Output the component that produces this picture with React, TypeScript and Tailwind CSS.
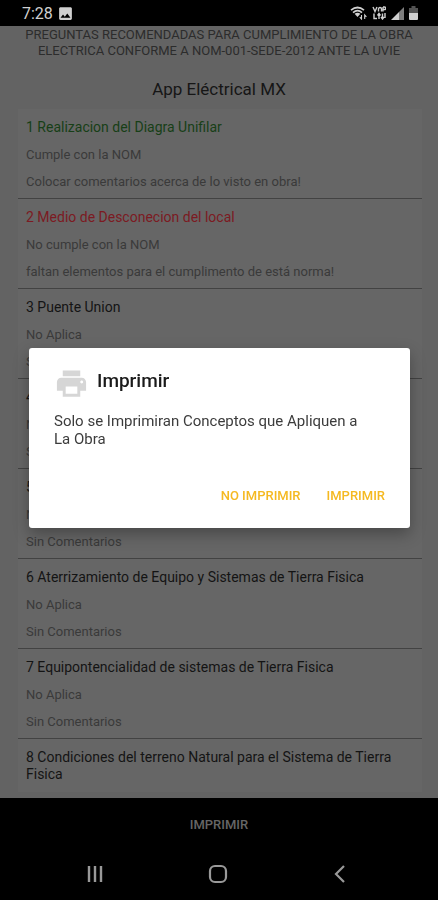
import { MdImage, MdPrint } from "react-icons/md";

type Item = {
  title: string;
  status?: string;
  comment?: string;
  color?: string;
};

const items: Item[] = [
  {
    title: "1 Realizacion del Diagra Unifilar",
    status: "Cumple con la NOM",
    comment: "Colocar comentarios acerca de lo visto en obra!",
    color: "text-[#173f17]",
  },
  {
    title: "2 Medio de Desconecion del local",
    status: "No cumple con la NOM",
    comment: "faltan elementos para el cumplimento de está norma!",
    color: "text-[#7c1a22]",
  },
  { title: "3 Puente Union", status: "No Aplica", comment: "Sin Comentarios" },
  { title: "4", status: "No Aplica", comment: "Sin Comentarios" },
  { title: "5", status: "No Aplica", comment: "Sin Comentarios" },
  {
    title: "6 Aterrizamiento de Equipo y Sistemas de Tierra Fisica",
    status: "No Aplica",
    comment: "Sin Comentarios",
  },
  {
    title: "7 Equipontencialidad de sistemas de Tierra Fisica",
    status: "No Aplica",
    comment: "Sin Comentarios",
  },
  { title: "8 Condiciones del terreno Natural para el Sistema de Tierra Fisica" },
];

function StatusBar() {
  return (
    <header className="flex h-[26px] shrink-0 items-center bg-black pl-[22px] pr-5 text-[#d0d0d0]">
      <span className="pt-0.5 text-base leading-none">7:28</span>
      <MdImage className="ml-1 size-[17px]" />
      <div className="ml-auto flex items-center gap-[5px]">
        <svg width="17" height="14" viewBox="0 0 17 14" fill="none" stroke="currentColor">
          <path d="M1 4.2Q7.5-1.2 14 4.2M3 6.6Q7.5 2.8 12 6.6" strokeWidth="1.7" />
          <path d="M4.6 7.8Q7.5 5.6 10.4 7.8L7.5 11Z" fill="currentColor" stroke="none" />
          <path d="M11.5 9v4l-1.7-1.8M14.7 13V9l1.7 1.8" strokeWidth="1.1" />
        </svg>
        <svg width="14" height="14" viewBox="0 0 14 14" fill="none" stroke="currentColor" strokeWidth="1.4">
          <path d="M1 1l2 4.500L5 1M6.500 5.500V3a1.500 1.500 0 013 0v2.500M11 1v4.500M11 1h1.500a1.200 1.200 0 010 2.500H11M2 7.500v5h3M7 13V8M5.500 9.500L7 7.500l1.500 2M10.500 7.500v5M9 11l1.500 2 1.500-2M13 7v5" />
        </svg>
        <svg width="13" height="13" viewBox="0 0 13 13" fill="currentColor">
          <path d="M0 13L8 5v8z" />
          <path d="M8 5l5-5v13H8z" opacity="0.6" />
        </svg>
        <svg width="9" height="14" viewBox="0 0 9 14" fill="currentColor">
          <path d="M2.500 0h4v2H9v5H0V2h2.500z" opacity="0.4" />
          <path d="M0 7h9v6a1 1 0 01-1 1H1a1 1 0 01-1-1z" />
        </svg>
      </div>
    </header>
  );
}

function Row({ item }: { item: Item }) {
  return (
    <li className="flex flex-col gap-2.5 border-b border-[#424242] bg-[#666666] px-2 pb-2 pt-2.5 last:border-transparent">
      <h2 className={`text-sm/[17px] ${item.color ?? "text-[#141414]"}`}>{item.title}</h2>
      {item.status && <p className="text-[13px]/[17px] text-[#3a3a3a]">{item.status}</p>}
      {item.comment && <p className="text-[13px]/[17px] text-[#3a3a3a]">{item.comment}</p>}
    </li>
  );
}

function PrintDialog() {
  return (
    <div className="fixed inset-x-0 bottom-[51px] top-[26px] flex items-center pl-[29px] pr-7">
      <div
        role="dialog"
        aria-labelledby="print-title"
        className="w-full rounded-[3px] bg-white px-[25px] pb-3.5 pt-[18px] shadow-[0_6px_16px_rgba(0,0,0,0.3)]"
      >
        <div className="flex items-center gap-2">
          <MdPrint className="size-[35px] text-[#d6d6d6]" />
          <h2 id="print-title" className="pb-1 text-[19px] font-medium text-[#1a1a1a]">
            Imprimir
          </h2>
        </div>
        <p className="mt-[11px] pr-4 text-[15px] leading-[18px] text-[#3c3c3c]">
          Solo se Imprimiran Conceptos que Apliquen a La Obra
        </p>
        <div className="mt-[30px] flex justify-end gap-[26px] text-[13px] font-medium text-[#f5b921]">
          <button className="h-9">NO IMPRIMIR</button>
          <button className="h-9">IMPRIMIR</button>
        </div>
      </div>
    </div>
  );
}

function NavBar() {
  return (
    <nav className="flex h-[49px] shrink-0 items-center justify-between bg-black pb-1 pl-[84px] pr-[87px] text-[#999999]">
      <button aria-label="Recientes">
        <svg width="22" height="22" viewBox="0 0 22 22" stroke="currentColor" strokeWidth="2.4">
          <path d="M5 3v16M11 3v16M17 3v16" />
        </svg>
      </button>
      <button aria-label="Inicio">
        <svg width="22" height="22" viewBox="0 0 22 22" fill="none" stroke="currentColor" strokeWidth="2.2">
          <rect x="3" y="3" width="16" height="16" rx="5" />
        </svg>
      </button>
      <button aria-label="Atrás">
        <svg width="22" height="22" viewBox="0 0 22 22" fill="none" stroke="currentColor" strokeWidth="2.2">
          <path d="M15 3l-8 8 8 8" />
        </svg>
      </button>
    </nav>
  );
}

export default function App() {
  return (
    <div className="flex h-screen flex-col bg-[#636363] font-['Roboto','Noto_Sans',sans-serif]">
      <StatusBar />
      <main className="min-h-0 flex-1 overflow-hidden px-4">
        <p className="pt-px text-center text-[13px]/4 text-[#2c2c2c]">
          PREGUNTAS RECOMENDADAS PARA CUMPLIMIENTO DE LA OBRA ELECTRICA CONFORME A NOM-001-SEDE-2012 ANTE LA UVIE
        </p>
        <h1 className="mt-4 text-center text-[17px]/7 text-[#161616]">App Eléctrical MX</h1>
        <ul className="ml-0.5 mt-1.5">
          {items.map((item) => (
            <Row key={item.title} item={item} />
          ))}
        </ul>
      </main>
      <button className="h-[53px] shrink-0 bg-black text-[13px] font-medium text-[#666666]">
        IMPRIMIR
      </button>
      <NavBar />
      <PrintDialog />
    </div>
  );
}
